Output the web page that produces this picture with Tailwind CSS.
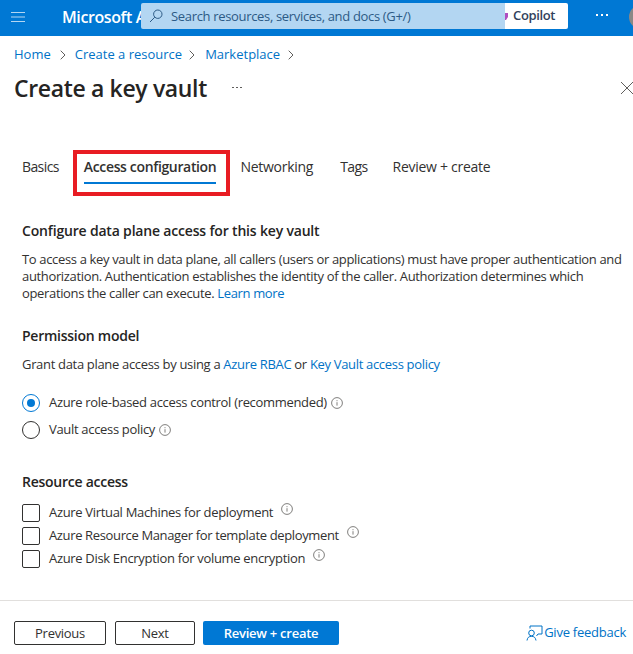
<!DOCTYPE html>
<html lang="en">
<head>
    <meta charset="UTF-8">
    <meta name="viewport" content="width=device-width, initial-scale=1.0">
    <title>Create a key vault</title>
    <script src="https://cdn.jsdelivr.net/npm/@tailwindcss/browser@4"></script>
</head>
<body class="bg-white font-['Open_Sans','Noto_Sans',sans-serif] text-[13px] text-[#323130] w-[633px] h-[654px] overflow-hidden flex flex-col">
    <!-- Top bar -->
    <header class="relative h-[36px] bg-[#0078d4] flex items-center shrink-0 overflow-hidden">
        <svg class="ml-[11px] mb-[2px]" width="14" height="12" viewBox="0 0 14 12" fill="none" stroke="#b3d6f2" stroke-width="1.2"><path d="M0 1.5h14M0 6h14M0 10.5h14"/></svg>
        <span class="ml-[37px] mb-[2px] text-[16px] font-semibold text-white whitespace-nowrap tracking-[-0.4px]">Microsoft Azure</span>
        <!-- Copilot button sits behind the search box -->
        <div class="absolute left-[497px] top-[3px] w-[71px] h-[26px] rounded-[2px] bg-white flex items-center justify-end pr-[13px] font-semibold text-[#323f5c] tracking-[-0.38px]">
            <svg class="absolute left-[8px] top-[10px]" width="3" height="7" viewBox="0 0 3 7"><path d="M0 0h3v4L1 7H0z" fill="#b04fc0"/></svg>
            Copilot
        </div>
        <!-- Search overlaps the product name -->
        <div class="absolute left-[141px] top-[3px] w-[364px] h-[26px] rounded-l-[2px] bg-[#b3d6f2] flex items-center text-[#2c5a85] z-10">
            <svg class="ml-[8px]" width="14" height="14" viewBox="0 0 14 14" fill="none" stroke="#2c5a85" stroke-width="1"><circle cx="8.8" cy="5.2" r="4.2"/><path d="M5.8 8.2L1 13"/></svg>
            <span class="ml-[8px] pt-px tracking-[-0.33px] whitespace-nowrap">Search resources, services, and docs (G+/)</span>
        </div>
        <div class="absolute left-[596px] top-[14px] flex gap-[3px]">
            <span class="w-[2px] h-[2px] bg-white"></span>
            <span class="w-[2px] h-[2px] bg-white"></span>
            <span class="w-[2px] h-[2px] bg-white"></span>
        </div>
        <div class="absolute left-[629px] top-[5px] w-[24px] h-[24px] rounded-full bg-[#8a8886]"></div>
    </header>

    <!-- Breadcrumb -->
    <nav class="flex items-center h-[20px] mt-[9px] ml-[14px] text-[#0072c6]">
        <span>Home</span>
        <svg class="ml-[9px] mr-[9px]" width="6" height="10" viewBox="0 0 6 10" fill="none" stroke="#605e5c"><path d="M.7.7L5 5 .7 9.3"/></svg>
        <span>Create a resource</span>
        <svg class="ml-[7px] mr-[10px]" width="6" height="10" viewBox="0 0 6 10" fill="none" stroke="#605e5c"><path d="M.7.7L5 5 .7 9.3"/></svg>
        <span>Marketplace</span>
        <svg class="ml-[8px]" width="6" height="10" viewBox="0 0 6 10" fill="none" stroke="#605e5c"><path d="M.7.7L5 5 .7 9.3"/></svg>
    </nav>

    <!-- Title -->
    <div class="flex items-center h-[36px] mt-[5px] ml-[14px] relative">
        <h1 class="text-[23px] font-semibold tracking-[-0.35px] text-[#252423]">Create a key vault</h1>
        <div class="ml-[25px] mb-[2px] flex gap-[2px]">
            <span class="w-[2px] h-[1px] bg-[#605e5c]"></span>
            <span class="w-[2px] h-[1px] bg-[#605e5c]"></span>
            <span class="w-[2px] h-[1px] bg-[#605e5c]"></span>
        </div>
        <svg class="absolute left-[607px] top-[12px]" width="12" height="12" viewBox="0 0 12 12" stroke="#605e5c" stroke-width="1"><path d="M0 0l12 12M12 0L0 12"/></svg>
    </div>

    <!-- Tabs -->
    <div class="flex items-start ml-[22px] mt-[45px] h-[46px] text-[14px] text-[#323130] tracking-[-0.27px]">
        <span class="pt-[5px] tracking-[-0.6px]">Basics</span>
        <div class="relative ml-[25px] pt-[5px]">
            <span class="font-semibold whitespace-nowrap tracking-[-0.35px]">Access configuration</span>
            <div class="w-[132px] h-[2px] bg-[#0078d4] mt-[5px]"></div>
            <div class="absolute left-[-11px] top-[-1px] w-[157px] h-[46px] border-[4px] border-[#e81c23]"></div>
        </div>
        <span class="ml-[24px] pt-[5px]">Networking</span>
        <span class="ml-[27px] pt-[5px] tracking-[-0.6px]">Tags</span>
        <span class="ml-[25px] pt-[5px]">Review + create</span>
    </div>

    <!-- Form -->
    <main class="ml-[22px] mr-[8px] mt-[24px] tracking-[-0.32px]">
        <h2 class="text-[14px] font-semibold leading-[20px] tracking-[-0.18px] text-[#252423]">Configure data plane access for this key vault</h2>
        <p class="mt-[10px] leading-[17px] tracking-[-0.345px] whitespace-nowrap">To access a key vault in data plane, all callers (users or applications) must have proper authentication and<br>authorization. Authentication establishes the identity of the caller. Authorization determines which<br>operations the caller can execute. <span class="text-[#0072c6]">Learn more</span></p>

        <h2 class="text-[14px] font-semibold leading-[20px] tracking-[-0.25px] mt-[24px] text-[#252423]">Permission model</h2>
        <p class="mt-[8px] leading-[20px]">Grant data plane access by using a <span class="text-[#0072c6]">Azure RBAC</span> or <span class="text-[#0072c6]">Key Vault access policy</span></p>

        <div class="mt-[19px] flex flex-col gap-[7px]">
            <div class="flex items-center h-[20px]">
                <span class="w-[18px] h-[18px] rounded-full border border-[#0078d4] flex items-center justify-center"><span class="w-[8px] h-[8px] rounded-full bg-[#0078d4]"></span></span>
                <span class="ml-[9px]">Azure role-based access control (recommended)</span>
                <svg class="ml-[4px]" width="12" height="12" viewBox="0 0 12 12" fill="none" stroke="#605e5c" stroke-width=".8"><circle cx="6" cy="6" r="5.4"/><path d="M6 5.2v3.4M6 3.2v1"/></svg>
            </div>
            <div class="flex items-center h-[20px]">
                <span class="w-[18px] h-[18px] rounded-full border border-[#323130]"></span>
                <span class="ml-[9px]">Vault access policy</span>
                <svg class="ml-[4px]" width="12" height="12" viewBox="0 0 12 12" fill="none" stroke="#605e5c" stroke-width=".8"><circle cx="6" cy="6" r="5.4"/><path d="M6 5.2v3.4M6 3.2v1"/></svg>
            </div>
        </div>

        <h2 class="text-[14px] font-semibold leading-[20px] tracking-[-0.25px] mt-[32px] text-[#252423]">Resource access</h2>
        <div class="mt-[12px] flex flex-col gap-[5px]">
            <div class="flex items-center h-[18px]">
                <span class="w-[18px] h-[18px] rounded-[2px] border border-[#323130]"></span>
                <span class="ml-[9px]">Azure Virtual Machines for deployment</span>
                <svg class="ml-[8px] mb-[9px]" width="12" height="12" viewBox="0 0 12 12" fill="none" stroke="#605e5c" stroke-width=".8"><circle cx="6" cy="6" r="5.4"/><path d="M6 5.2v3.4M6 3.2v1"/></svg>
            </div>
            <div class="flex items-center h-[18px]">
                <span class="w-[18px] h-[18px] rounded-[2px] border border-[#323130]"></span>
                <span class="ml-[9px] tracking-[-0.36px]">Azure Resource Manager for template deployment</span>
                <svg class="ml-[8px] mb-[9px]" width="12" height="12" viewBox="0 0 12 12" fill="none" stroke="#605e5c" stroke-width=".8"><circle cx="6" cy="6" r="5.4"/><path d="M6 5.2v3.4M6 3.2v1"/></svg>
            </div>
            <div class="flex items-center h-[18px]">
                <span class="w-[18px] h-[18px] rounded-[2px] border border-[#323130]"></span>
                <span class="ml-[9px]">Azure Disk Encryption for volume encryption</span>
                <svg class="ml-[8px] mb-[9px]" width="12" height="12" viewBox="0 0 12 12" fill="none" stroke="#605e5c" stroke-width=".8"><circle cx="6" cy="6" r="5.4"/><path d="M6 5.2v3.4M6 3.2v1"/></svg>
            </div>
        </div>
    </main>

    <!-- Footer -->
    <footer class="mt-auto h-[54px] border-t border-[#e1dfdd] flex items-start pt-[20px] pl-[14px] pr-[7px] tracking-[-0.25px]">
        <button class="w-[92px] h-[24px] border border-[#323130] rounded-[2px] font-medium leading-none tracking-[-0.3px]">Previous</button>
        <button class="ml-[9px] w-[80px] h-[24px] border border-[#323130] rounded-[2px] font-medium leading-none tracking-[-0.3px]">Next</button>
        <button class="ml-[8px] w-[136px] h-[24px] bg-[#0078d4] rounded-[2px] text-white font-semibold leading-none">Review + create</button>
        <div class="ml-auto flex items-center h-[24px] text-[#0072c6]">
            <svg width="17" height="16" viewBox="0 0 17 16" fill="none" stroke="#0072c6" stroke-width="1"><circle cx="5.5" cy="8" r="2.8"/><path d="M1 15.5c.4-3 2-4.200 4.500-4.200s4 1.200 4.500 4.200M4 3.500V1h12v8h-4l-1.500 2"/></svg>
            <span class="ml-px">Give feedback</span>
        </div>
    </footer>
</body>
</html>
